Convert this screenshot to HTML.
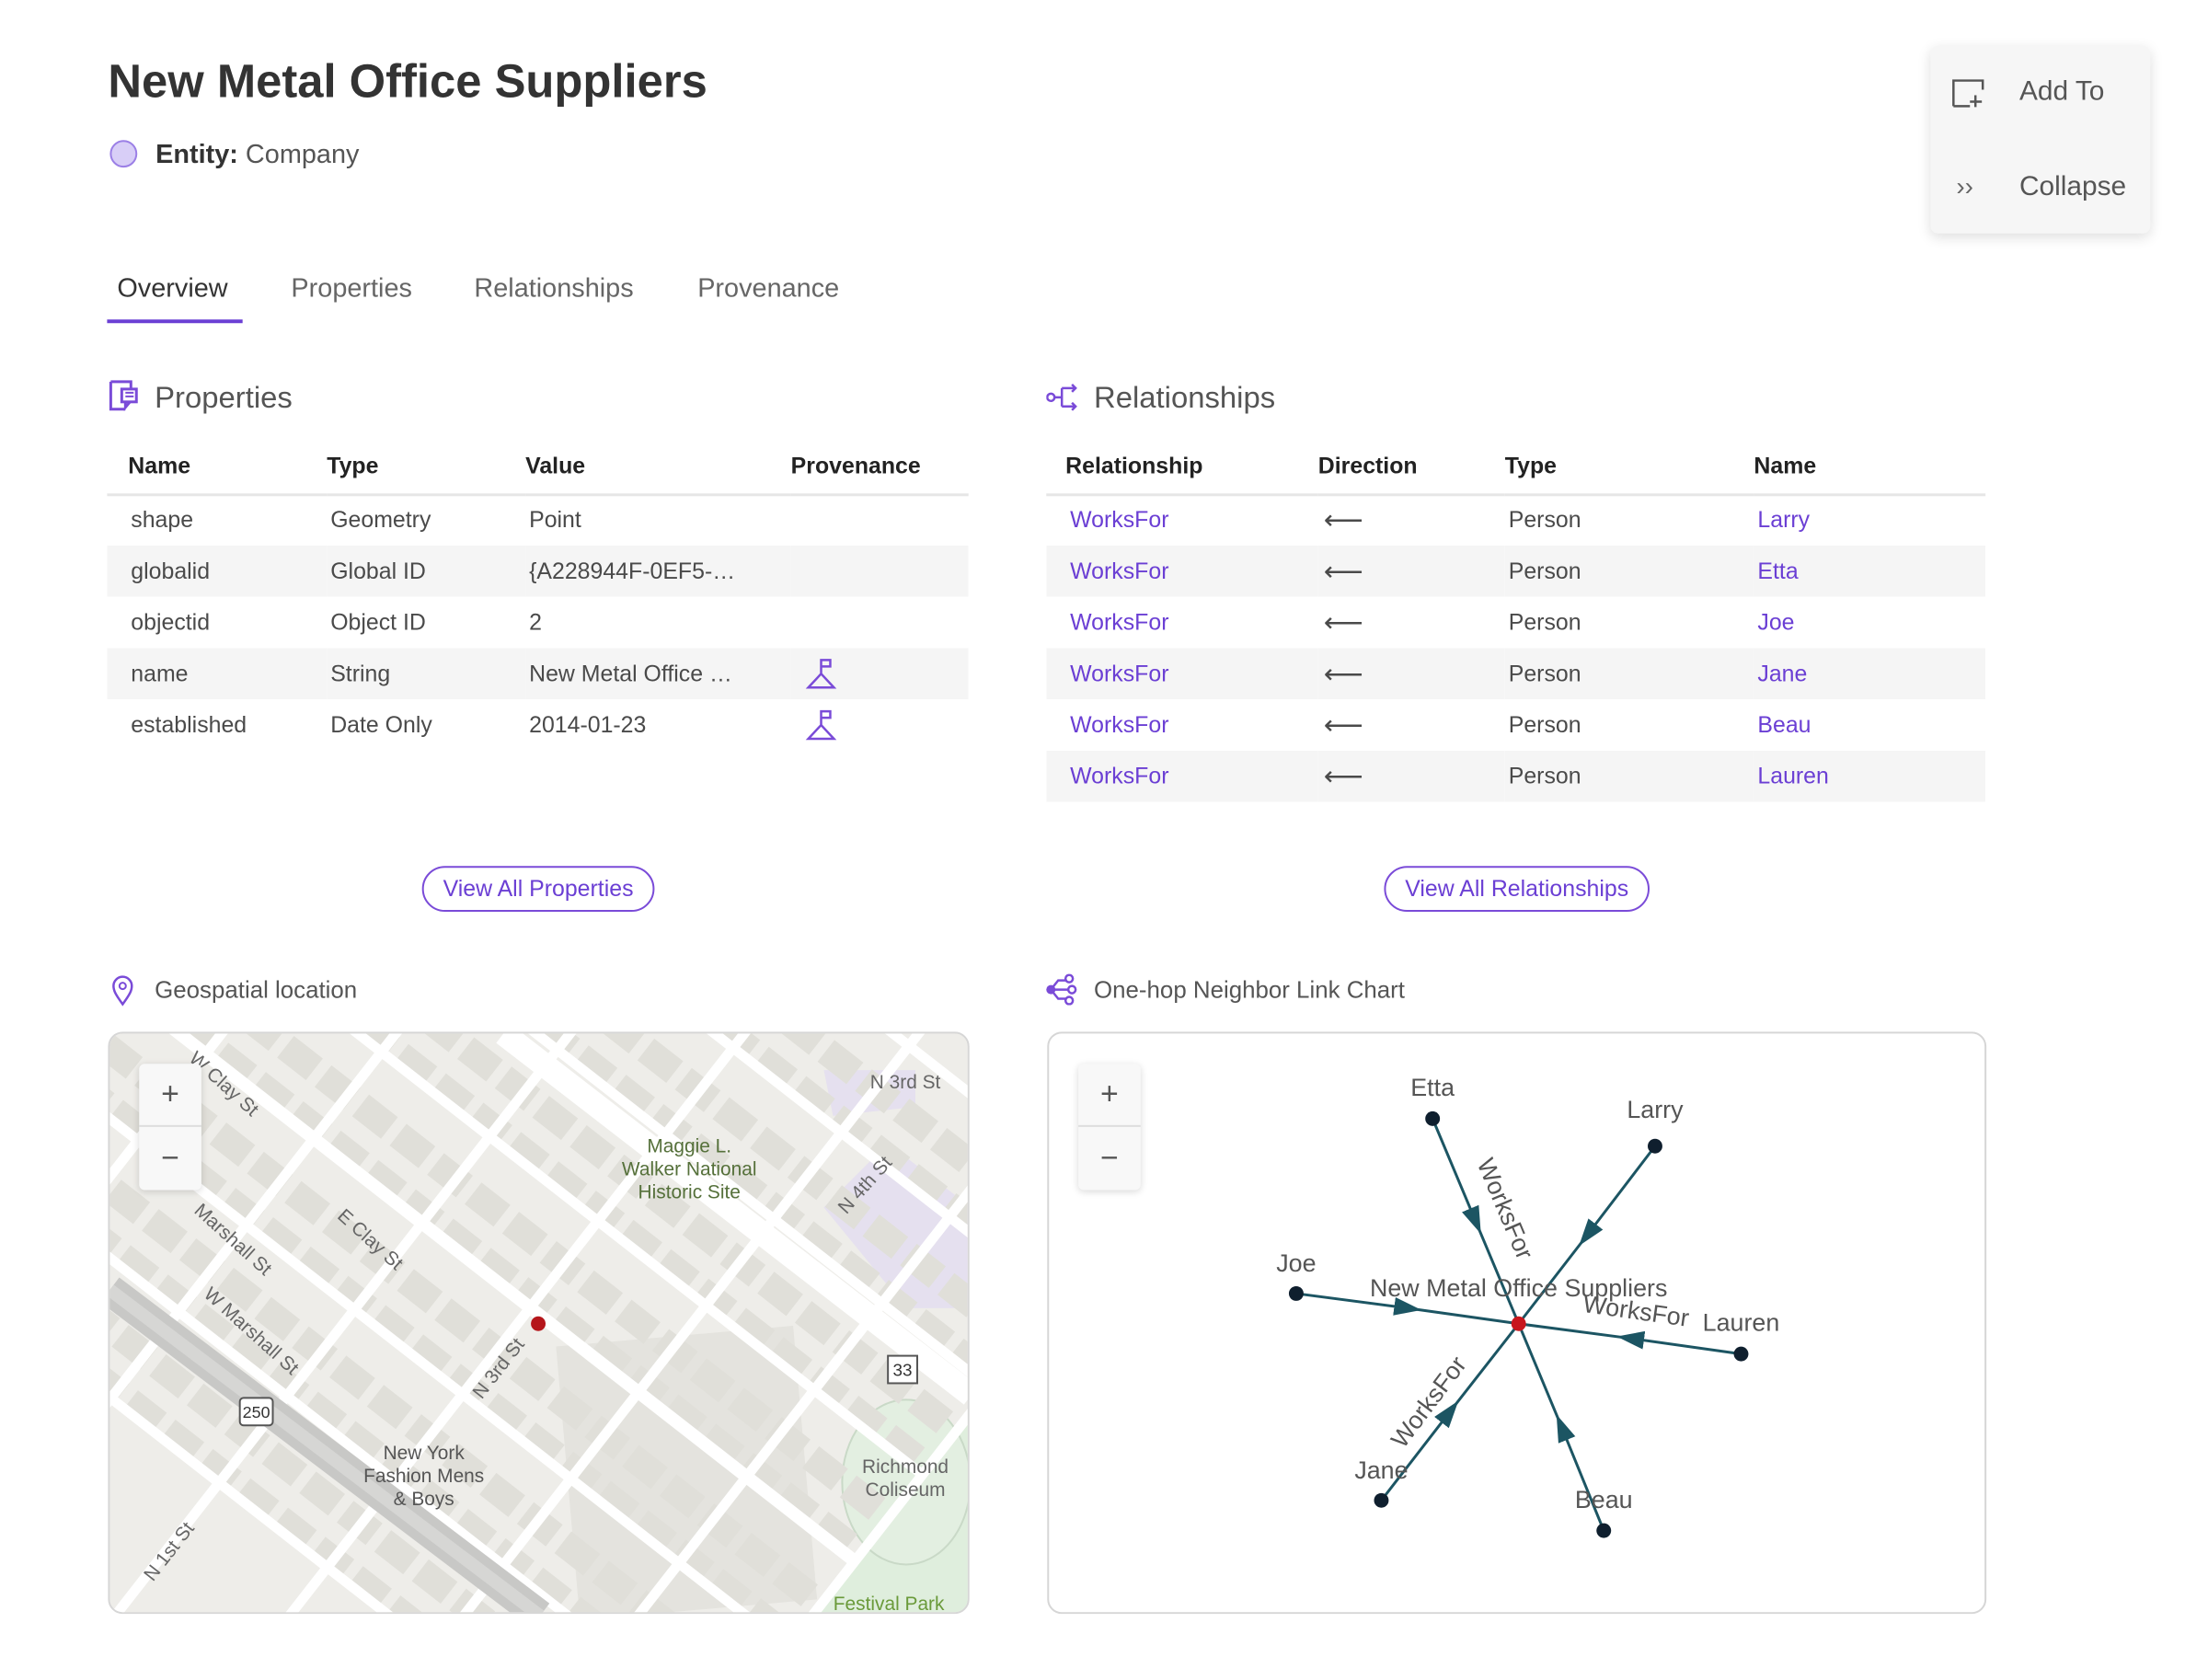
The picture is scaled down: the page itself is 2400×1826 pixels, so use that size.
<!DOCTYPE html>
<html style="width:2400px;height:1826px;overflow:hidden"><head><meta charset="utf-8">
<style>
*{margin:0;padding:0;box-sizing:border-box}
body{width:2400px;height:1826px;background:#fff;font-family:"Liberation Sans",sans-serif;color:#4a4a4a;position:relative;overflow:hidden}
#w{position:absolute;left:0;top:0;width:2400px;height:1826px;transform:scale(0.995);transform-origin:0 0}
.a{position:absolute;white-space:nowrap}
.t{line-height:1}
table{border-collapse:collapse;position:absolute;font-size:25px;table-layout:fixed}
td,th{height:56px;text-align:left;padding:0;font-weight:normal;overflow:hidden;white-space:nowrap}
th{font-weight:bold;color:#222;font-size:25px;height:59px}
tr.g td{background:#f5f5f5}
.hd{border-bottom:3px solid #e6e6e6}
.p{color:#6b3fd4}
.btn{position:absolute;height:50px;border:2px solid #7a4bd8;border-radius:25px;color:#6b3fd4;font-size:25px;display:flex;align-items:center;justify-content:center}
.box{position:absolute;border:2px solid #d6d6d6;border-radius:16px;overflow:hidden}
.zc{position:absolute;width:68px;height:138px;background:#f8f8f8;border-radius:6px;box-shadow:0 2px 8px rgba(0,0,0,.15)}
.zc div{height:69px;display:flex;align-items:center;justify-content:center;font-size:34px;color:#555}
.zc div:first-child{border-bottom:2px solid #ddd}
</style></head><body><div id="w">

<div class="a t" style="left:118px;top:63px;font-size:51px;font-weight:bold;color:#333">New Metal Office Suppliers</div>
<div class="a" style="left:120px;top:153px;width:30px;height:30px;border-radius:50%;background:#d8cef7;border:2px solid #9b7fe6"></div>
<div class="a t" style="left:170px;top:155px;font-size:29px;color:#555"><b style="color:#333">Entity:</b> Company</div>

<div class="a t" style="left:128px;top:301px;font-size:29px;color:#333">Overview</div>
<div class="a t" style="left:318px;top:301px;font-size:29px;color:#666">Properties</div>
<div class="a t" style="left:518px;top:301px;font-size:29px;color:#666">Relationships</div>
<div class="a t" style="left:762px;top:301px;font-size:29px;color:#666">Provenance</div>
<div class="a" style="left:117px;top:349px;width:148px;height:4px;background:#6b3fd4"></div>

<div class="a" style="left:2109px;top:50px;width:240px;height:205px;background:#f6f6f6;border-radius:8px;box-shadow:0 4px 14px rgba(0,0,0,.13)"></div>
<svg class="a" style="left:2132px;top:86px" width="38" height="32" viewBox="0 0 38 32"><path d="M2 30V2h32v10M2 30h18M26 18v13M20 25h13" stroke="#555" stroke-width="2.5" fill="none"/></svg>
<div class="a t" style="left:2206px;top:85px;font-size:30px;color:#555">Add To</div>
<div class="a t" style="left:2137px;top:190px;font-size:28px;color:#666">››</div>
<div class="a t" style="left:2206px;top:189px;font-size:30px;color:#555">Collapse</div>

<svg class="a" style="left:118px;top:414px" width="34" height="36" viewBox="0 0 34 36"><path d="M3 3h22v8M3 3v30h16" stroke="#7a4bd8" stroke-width="3" fill="none"/><rect x="15" y="11" width="16" height="14" stroke="#7a4bd8" stroke-width="3" fill="none"/><path d="M19 25v6l5-6" stroke="#7a4bd8" stroke-width="3" fill="none"/><path d="M19 15h9M19 19h9" stroke="#7a4bd8" stroke-width="2"/></svg>
<div class="a t" style="left:169px;top:417px;font-size:33px;color:#555">Properties</div>

<table style="left:117px;top:481px;width:941px">
<colgroup><col style="width:240px"><col style="width:217px"><col style="width:290px"><col></colgroup>
<tr class="hd"><th style="padding-left:23px">Name</th><th>Type</th><th>Value</th><th>Provenance</th></tr>
<tr><td style="padding-left:26px">shape</td><td style="padding-left:4px">Geometry</td><td style="padding-left:4px">Point</td><td></td></tr>
<tr class="g"><td style="padding-left:26px">globalid</td><td style="padding-left:4px">Global ID</td><td style="padding-left:4px">{A228944F-0EF5-…</td><td></td></tr>
<tr><td style="padding-left:26px">objectid</td><td style="padding-left:4px">Object ID</td><td style="padding-left:4px">2</td><td></td></tr>
<tr class="g"><td style="padding-left:26px">name</td><td style="padding-left:4px">String</td><td style="padding-left:4px">New Metal Office …</td><td><svg style="margin-left:16px;vertical-align:middle" width="34" height="36" viewBox="0 0 34 36"><path d="M17 18V3h10v7h-10M3 33h28L17 18z" stroke="#7a4bd8" stroke-width="2.5" fill="none"/></svg></td></tr>
<tr><td style="padding-left:26px">established</td><td style="padding-left:4px">Date Only</td><td style="padding-left:4px">2014-01-23</td><td><svg style="margin-left:16px;vertical-align:middle" width="34" height="36" viewBox="0 0 34 36"><path d="M17 18V3h10v7h-10M3 33h28L17 18z" stroke="#7a4bd8" stroke-width="2.5" fill="none"/></svg></td></tr>
</table>
<div class="btn" style="left:461px;top:946px;width:254px">View All Properties</div>

<svg class="a" style="left:1143px;top:419px" width="36" height="30" viewBox="0 0 36 30"><circle cx="5" cy="15" r="4" stroke="#7a4bd8" stroke-width="2.5" fill="none"/><path d="M9 15h8M17 5v20M17 5h15M17 25h15M28 1l4 4-4 4M28 21l4 4-4 4" stroke="#7a4bd8" stroke-width="2.5" fill="none"/></svg>
<div class="a t" style="left:1195px;top:417px;font-size:33px;color:#555">Relationships</div>
<table style="left:1143px;top:481px;width:1026px">
<colgroup><col style="width:297px"><col style="width:204px"><col style="width:272px"><col></colgroup>
<tr class="hd"><th style="padding-left:21px">Relationship</th><th>Direction</th><th>Type</th><th>Name</th></tr>
<tr><td class="p" style="padding-left:26px">WorksFor</td><td style="font-size:30px;padding-left:6px">⟵</td><td style="padding-left:4px">Person</td><td class="p" style="padding-left:4px">Larry</td></tr>
<tr class="g"><td class="p" style="padding-left:26px">WorksFor</td><td style="font-size:30px;padding-left:6px">⟵</td><td style="padding-left:4px">Person</td><td class="p" style="padding-left:4px">Etta</td></tr>
<tr><td class="p" style="padding-left:26px">WorksFor</td><td style="font-size:30px;padding-left:6px">⟵</td><td style="padding-left:4px">Person</td><td class="p" style="padding-left:4px">Joe</td></tr>
<tr class="g"><td class="p" style="padding-left:26px">WorksFor</td><td style="font-size:30px;padding-left:6px">⟵</td><td style="padding-left:4px">Person</td><td class="p" style="padding-left:4px">Jane</td></tr>
<tr><td class="p" style="padding-left:26px">WorksFor</td><td style="font-size:30px;padding-left:6px">⟵</td><td style="padding-left:4px">Person</td><td class="p" style="padding-left:4px">Beau</td></tr>
<tr class="g"><td class="p" style="padding-left:26px">WorksFor</td><td style="font-size:30px;padding-left:6px">⟵</td><td style="padding-left:4px">Person</td><td class="p" style="padding-left:4px">Lauren</td></tr>
</table>
<div class="btn" style="left:1512px;top:946px;width:290px">View All Relationships</div>

<svg class="a" style="left:121px;top:1065px" width="26" height="34" viewBox="0 0 26 34"><path d="M13 32C5 21 3 17 3 12a10 10 0 0 1 20 0c0 5-2 9-10 20z" stroke="#7a4bd8" stroke-width="2.5" fill="none"/><circle cx="13" cy="12" r="3.5" stroke="#7a4bd8" stroke-width="2" fill="none"/></svg>
<div class="a t" style="left:169px;top:1068px;font-size:26px;color:#555">Geospatial location</div>

<div class="box" style="left:118px;top:1127px;width:941px;height:636px;background:#eeede9">
<svg width="941" height="636" viewBox="0 0 941 636" style="position:absolute;left:0;top:0">
<rect width="941" height="636" fill="#eeede9"/>
<path d="M760 636 L941 420 L941 636 Z" fill="#dfeedd"/>
<ellipse cx="870" cy="490" rx="70" ry="90" fill="#e3efe1" stroke="#c9d9c7" stroke-width="2"/>
<path d="M780 190 L850 120 L941 190 L941 300 L870 300 Z" fill="#e5e0ef"/>
<path d="M780 40 L880 40 L880 80 L790 90 Z" fill="#e5e0ef"/>
<rect x="500" y="330" width="260" height="300" fill="#e4e3de" transform="rotate(-5 630 480)"/>
<g transform="rotate(38 470 318)" fill="none" stroke="#fff">
<g stroke="#e0dfd9" stroke-width="30" stroke-dasharray="40 12">
<path d="M-300 -60h1200M-300 60h1200M-300 180h1200M-300 300h1200M-300 420h1200M-300 540h1200M-300 660h1200"/>
<path d="M-300 -110h1200M-300 10h1200M-300 130h1200M-300 250h1200M-300 370h1200M-300 490h1200M-300 610h1200"/>
</g>
<g stroke-width="11">
<path d="M-300 -170h1200M-300 -50h1200M-300 70h1200M-300 190h1200M-300 430h1200M-300 550h1200M-300 670h1200"/>
<path d="M-150 -400v1400M0 -400v1400M150 -400v1400M300 -400v1400M450 -400v1400M600 -400v1400M750 -400v1400M900 -400v1400"/>
</g>
<path d="M-300 310h1200" stroke-width="14"/>
<path d="M-300 -280h1200" stroke-width="28"/>
</g>
<path d="M430 0 L941 395" stroke="#fff" stroke-width="26"/>
<path d="M0 280 L470 636" stroke="#c8c8c6" stroke-width="34"/>
<path d="M0 280 L470 636" stroke="#d6d6d4" stroke-width="14"/>
<circle cx="468" cy="317" r="8" fill="#b5161b"/>
<rect x="850" y="352" width="32" height="30" fill="#fff" stroke="#555" stroke-width="2"/>
<text x="866" y="374" font-size="19" text-anchor="middle" fill="#333" font-family="Liberation Sans">33</text>
<rect x="142" y="398" width="36" height="30" fill="#fff" stroke="#555" stroke-width="2" rx="4"/>
<text x="160" y="420" font-size="18" text-anchor="middle" fill="#333" font-family="Liberation Sans">250</text>
<g font-family="Liberation Sans" font-size="21" text-anchor="middle">
<text x="633" y="130" fill="#55703a">Maggie L.</text>
<text x="633" y="155" fill="#55703a">Walker National</text>
<text x="633" y="180" fill="#55703a">Historic Site</text>
<text x="343" y="465" fill="#555">New York</text>
<text x="343" y="490" fill="#555">Fashion Mens</text>
<text x="343" y="515" fill="#555">&amp; Boys</text>
<text x="869" y="480" fill="#666">Richmond</text>
<text x="869" y="505" fill="#666">Coliseum</text>
<text x="851" y="630" fill="#6a9a3a">Festival Park</text>
<text x="869" y="60" fill="#666">N 3rd St</text>
<text transform="translate(430,370) rotate(-52)" fill="#666">N 3rd St</text>
<text transform="translate(830,170) rotate(-48)" fill="#666">N 4th St</text>
<text transform="translate(280,230) rotate(42)" fill="#666">E Clay St</text>
<text transform="translate(150,330) rotate(42)" fill="#666">W Marshall St</text>
<text transform="translate(130,230) rotate(42)" fill="#666">Marshall St</text>
<text transform="translate(120,60) rotate(42)" fill="#666">W Clay St</text>
<text transform="translate(70,570) rotate(-52)" fill="#666">N 1st St</text>
</g>
</svg>
<div class="zc" style="left:32px;top:33px"><div>+</div><div>−</div></div>
</div>

<svg class="a" style="left:1141px;top:1064px" width="36" height="34" viewBox="0 0 36 34"><circle cx="27" cy="5" r="4" stroke="#7a4bd8" stroke-width="2.5" fill="none"/><circle cx="30" cy="17" r="4" stroke="#7a4bd8" stroke-width="2.5" fill="none"/><circle cx="27" cy="29" r="4" stroke="#7a4bd8" stroke-width="2.5" fill="none"/><circle cx="7" cy="17" r="5" fill="#7a4bd8"/><path d="M7 17h19M7 17L15 7h9M7 17l8 10h9" stroke="#7a4bd8" stroke-width="2.5" fill="none"/></svg>
<div class="a t" style="left:1195px;top:1068px;font-size:26px;color:#555">One-hop Neighbor Link Chart</div>

<div class="box" style="left:1144px;top:1127px;width:1026px;height:636px;background:#fff">
<svg width="1026" height="636" viewBox="0 0 1026 636" style="position:absolute;left:0;top:0" font-family="Liberation Sans">
<defs><marker id="ar" viewBox="0 0 30 20" refX="15" refY="10" markerWidth="30" markerHeight="20" markerUnits="userSpaceOnUse" orient="auto"><path d="M0 0L30 10L0 20z" fill="#1c5563"/></marker></defs>
<g stroke="#1c5563" stroke-width="3">
<path d="M419 93L466 205L513 317" marker-mid="url(#ar)"/>
<path d="M662 123L588 220L513 317" marker-mid="url(#ar)"/>
<path d="M270 284L392 300L513 317" marker-mid="url(#ar)"/>
<path d="M756 350L635 333L513 317" marker-mid="url(#ar)"/>
<path d="M363 510L438 413L513 317" marker-mid="url(#ar)"/>
<path d="M606 543L560 430L513 317" marker-mid="url(#ar)"/>
</g>
<g fill="#0f1f2e"><circle cx="419" cy="93" r="8"/><circle cx="662" cy="123" r="8"/><circle cx="270" cy="284" r="8"/><circle cx="756" cy="350" r="8"/><circle cx="363" cy="510" r="8"/><circle cx="606" cy="543" r="8"/></g>
<circle cx="513" cy="317" r="8" fill="#c8161d"/>
<g font-size="27" fill="#555" text-anchor="middle">
<text x="419" y="68">Etta</text><text x="662" y="92">Larry</text><text x="270" y="260">Joe</text>
<text x="756" y="325">Lauren</text><text x="363" y="486">Jane</text><text x="606" y="518">Beau</text>
<text x="513" y="287">New Metal Office Suppliers</text>
<text transform="translate(490,195) rotate(67)">WorksFor</text>
<text transform="translate(640,312) rotate(8)">WorksFor</text>
<text transform="translate(422,408) rotate(-53)">WorksFor</text>
</g>
</svg>
<div class="zc" style="left:32px;top:33px"><div>+</div><div>−</div></div>
</div>

</div></body></html>
